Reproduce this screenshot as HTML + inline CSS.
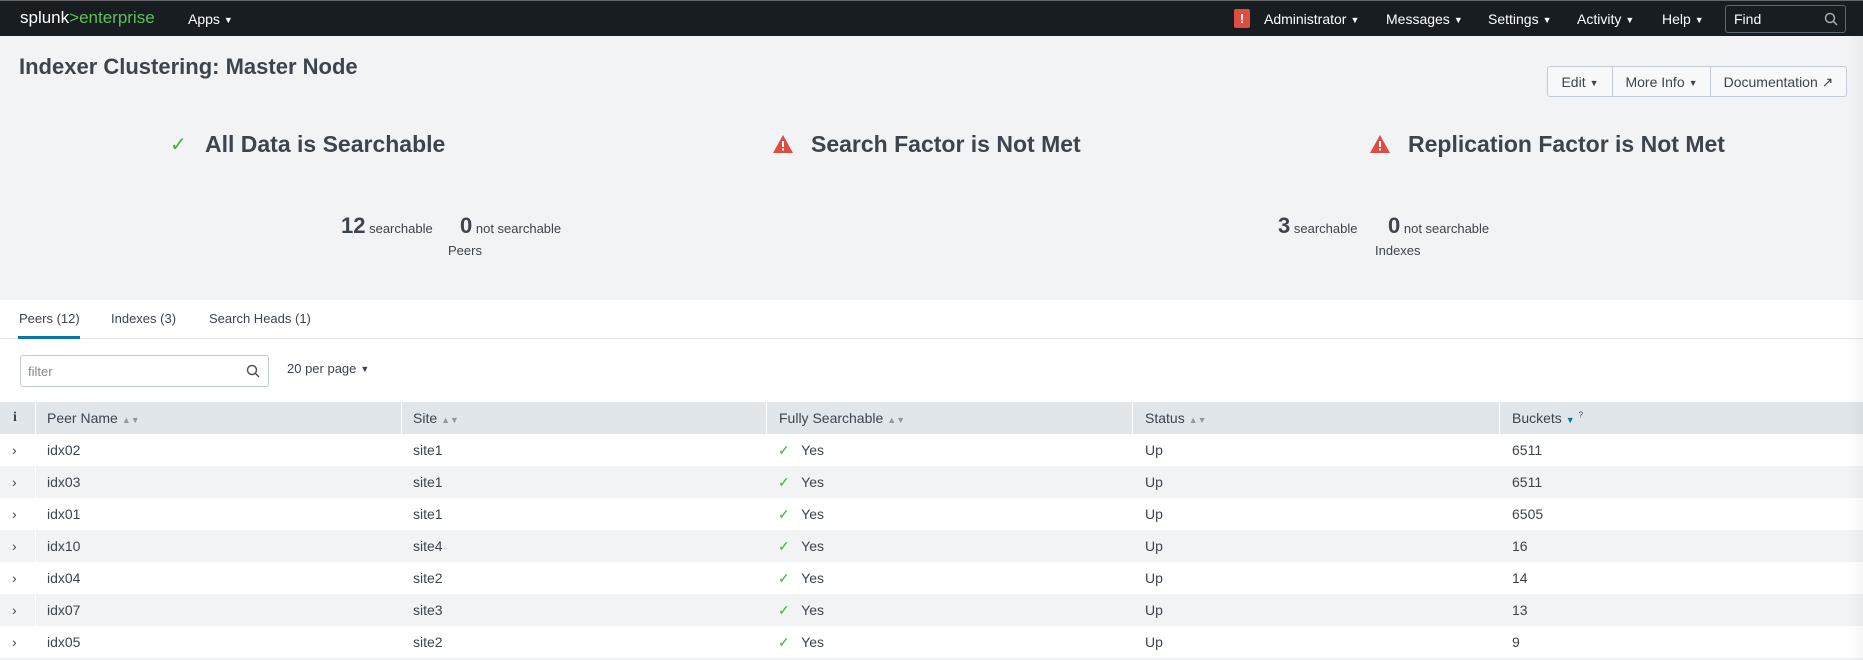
<!DOCTYPE html>
<html style="overflow:hidden"><head><meta charset="utf-8"><style>
*{box-sizing:border-box;margin:0;padding:0}
html,body{width:1863px;height:660px;overflow:hidden}
body{font-family:"Liberation Sans",sans-serif;color:#3c444d;background:#fff;position:relative}
.a{position:absolute;white-space:nowrap}
.nav{position:absolute;left:0;top:0;width:1863px;height:36px;background:#171d21;border-top:1px solid #666}
.nav .a{color:#fff;font-size:14px;top:10px}
.car{font-size:9px;margin-left:4px;vertical-align:1px}
.gray{position:absolute;left:0;top:36px;width:1863px;height:264px;background:#f2f3f5}
h2{font-weight:bold;color:#3c444d;font-size:23px}
.btn{position:absolute;top:30px;height:31px;border:1px solid #c3cbd4;background:#f7f8fa;font-size:14px;padding-top:7px;text-align:center;color:#3c444d}
.row{position:absolute;left:0;width:1863px;height:32px;font-size:14px;color:#3c444d}
.row .a{top:8px}
.g{background:#f2f3f5}
.hd{background:#e1e6eb}
.sep{position:absolute;top:0;width:1px;height:32px;background:#fff}
.sort{color:#999;font-size:9px;margin-left:4px}
</style></head><body>
<div class="nav">
<div class="a" style="left:20px;top:7px;font-size:17px"><span>splunk</span><span style="color:#5cc05c">&gt;enterprise</span></div>
<div class="a" style="left:188px">Apps<span class="car">▼</span></div>
<div class="a" style="left:1234px;top:8px;width:16px;height:19px;background:#dc4e41;border-radius:2px;font-weight:bold;text-align:center;font-size:13px;line-height:19px">!</div>
<div class="a" style="left:1264px">Administrator<span class="car">▼</span></div>
<div class="a" style="left:1386px">Messages<span class="car">▼</span></div>
<div class="a" style="left:1488px">Settings<span class="car">▼</span></div>
<div class="a" style="left:1577px">Activity<span class="car">▼</span></div>
<div class="a" style="left:1662px">Help<span class="car">▼</span></div>
<div class="a" style="left:1725px;top:4px;width:121px;height:28px;border:1px solid #5c6773;border-radius:3px;padding:5px 8px">Find
<svg style="position:absolute;right:7px;top:6px" width="14" height="14" viewBox="0 0 14 14"><circle cx="6" cy="6" r="4.5" fill="none" stroke="#aaa" stroke-width="1.5"/><path d="M9.5 9.5L13 13" stroke="#aaa" stroke-width="1.5"/></svg></div>
</div>
<div class="gray">
<div class="a" style="left:19px;top:18px;font-size:22px;font-weight:bold;color:#3c444d">Indexer Clustering: Master Node</div>
<div class="btn" style="left:1547px;width:66px;border-radius:3px 0 0 3px">Edit<span class="car">▼</span></div>
<div class="btn" style="left:1612px;width:99px;border-left:1px solid #c3cbd4">More Info<span class="car">▼</span></div>
<div class="btn" style="left:1710px;width:137px;border-radius:0 3px 3px 0">Documentation ↗</div>
<div class="a" style="left:170px;top:96px;font-size:20px;color:#4aa84a">✓</div>
<h2 class="a" style="left:205px;top:95px">All Data is Searchable</h2>
<svg class="a" style="left:773px;top:99px" width="20" height="18" viewBox="0 0 20 18"><path d="M10 0L20 18H0Z" fill="#dc4e41"/><rect x="9" y="6" width="2" height="6" fill="#fff"/><rect x="9" y="13.5" width="2" height="2" fill="#fff"/></svg>
<h2 class="a" style="left:811px;top:95px">Search Factor is Not Met</h2>
<svg class="a" style="left:1370px;top:99px" width="20" height="18" viewBox="0 0 20 18"><path d="M10 0L20 18H0Z" fill="#dc4e41"/><rect x="9" y="6" width="2" height="6" fill="#fff"/><rect x="9" y="13.5" width="2" height="2" fill="#fff"/></svg>
<h2 class="a" style="left:1408px;top:95px">Replication Factor is Not Met</h2>
<div class="a" style="left:341px;top:177px;font-size:13px"><b style="font-size:22px">12</b> searchable</div>
<div class="a" style="left:460px;top:177px;font-size:13px"><b style="font-size:22px">0</b> not searchable</div>
<div class="a" style="left:448px;top:207px;font-size:13px">Peers</div>
<div class="a" style="left:1278px;top:177px;font-size:13px"><b style="font-size:22px">3</b> searchable</div>
<div class="a" style="left:1388px;top:177px;font-size:13px"><b style="font-size:22px">0</b> not searchable</div>
<div class="a" style="left:1375px;top:207px;font-size:13px">Indexes</div>
</div>
<div class="a" style="left:19px;top:311px;font-size:13px">Peers (12)</div>
<div class="a" style="left:111px;top:311px;font-size:13px">Indexes (3)</div>
<div class="a" style="left:209px;top:311px;font-size:13px">Search Heads (1)</div>
<div class="a" style="left:0;top:338px;width:1863px;height:1px;background:#e1e6eb"></div>
<div class="a" style="left:18px;top:336px;width:62px;height:3px;background:#0877a6"></div>
<div class="a" style="left:20px;top:355px;width:249px;height:32px;border:1px solid #c3cbd4;border-radius:3px;padding:8px 7px;font-size:13px;color:#888">filter
<svg style="position:absolute;right:8px;top:8px" width="14" height="14" viewBox="0 0 14 14"><circle cx="6" cy="6" r="4.5" fill="none" stroke="#555" stroke-width="1.5"/><path d="M9.5 9.5L13 13" stroke="#555" stroke-width="1.5"/></svg></div>
<div class="a" style="left:287px;top:361px;font-size:13px">20 per page<span class="car">▼</span></div>

<div class="row hd" style="top:402px">
<div class="a" style="left:13px;font-weight:bold;font-family:'Liberation Serif',serif">i</div>
<div class="sep" style="left:35px"></div><div class="a" style="left:47px">Peer Name<span class="sort">▲▼</span></div>
<div class="sep" style="left:401px"></div><div class="a" style="left:413px">Site<span class="sort">▲▼</span></div>
<div class="sep" style="left:766px"></div><div class="a" style="left:779px">Fully Searchable<span class="sort">▲▼</span></div>
<div class="sep" style="left:1132px"></div><div class="a" style="left:1145px">Status<span class="sort">▲▼</span></div>
<div class="sep" style="left:1499px"></div><div class="a" style="left:1512px">Buckets <span style="color:#0877a6;font-size:9px">▼</span> <sup style="font-size:8px">?</sup></div>
</div>
<div class="row" style="top:434px"><div class="a" style="left:12px">›</div><div class="a" style="left:47px">idx02</div><div class="a" style="left:413px">site1</div><div class="a" style="left:778px"><span style="color:#4aa84a">✓</span>&nbsp;&nbsp; Yes</div><div class="a" style="left:1145px">Up</div><div class="a" style="left:1512px">6511</div></div>
<div class="row g" style="top:466px"><div class="sep" style="left:35px"></div><div class="a" style="left:12px">›</div><div class="a" style="left:47px">idx03</div><div class="a" style="left:413px">site1</div><div class="a" style="left:778px"><span style="color:#4aa84a">✓</span>&nbsp;&nbsp; Yes</div><div class="a" style="left:1145px">Up</div><div class="a" style="left:1512px">6511</div></div>
<div class="row" style="top:498px"><div class="a" style="left:12px">›</div><div class="a" style="left:47px">idx01</div><div class="a" style="left:413px">site1</div><div class="a" style="left:778px"><span style="color:#4aa84a">✓</span>&nbsp;&nbsp; Yes</div><div class="a" style="left:1145px">Up</div><div class="a" style="left:1512px">6505</div></div>
<div class="row g" style="top:530px"><div class="sep" style="left:35px"></div><div class="a" style="left:12px">›</div><div class="a" style="left:47px">idx10</div><div class="a" style="left:413px">site4</div><div class="a" style="left:778px"><span style="color:#4aa84a">✓</span>&nbsp;&nbsp; Yes</div><div class="a" style="left:1145px">Up</div><div class="a" style="left:1512px">16</div></div>
<div class="row" style="top:562px"><div class="a" style="left:12px">›</div><div class="a" style="left:47px">idx04</div><div class="a" style="left:413px">site2</div><div class="a" style="left:778px"><span style="color:#4aa84a">✓</span>&nbsp;&nbsp; Yes</div><div class="a" style="left:1145px">Up</div><div class="a" style="left:1512px">14</div></div>
<div class="row g" style="top:594px"><div class="sep" style="left:35px"></div><div class="a" style="left:12px">›</div><div class="a" style="left:47px">idx07</div><div class="a" style="left:413px">site3</div><div class="a" style="left:778px"><span style="color:#4aa84a">✓</span>&nbsp;&nbsp; Yes</div><div class="a" style="left:1145px">Up</div><div class="a" style="left:1512px">13</div></div>
<div class="row" style="top:626px"><div class="a" style="left:12px">›</div><div class="a" style="left:47px">idx05</div><div class="a" style="left:413px">site2</div><div class="a" style="left:778px"><span style="color:#4aa84a">✓</span>&nbsp;&nbsp; Yes</div><div class="a" style="left:1145px">Up</div><div class="a" style="left:1512px">9</div></div>
<div class="a" style="left:0;top:658px;width:1863px;height:2px;background:#f2f3f5"></div>
<div class="a" style="left:1848px;top:36px;width:15px;height:624px;background:linear-gradient(to right,rgba(0,0,0,0),rgba(0,0,0,0.04))"></div>
</body></html>
